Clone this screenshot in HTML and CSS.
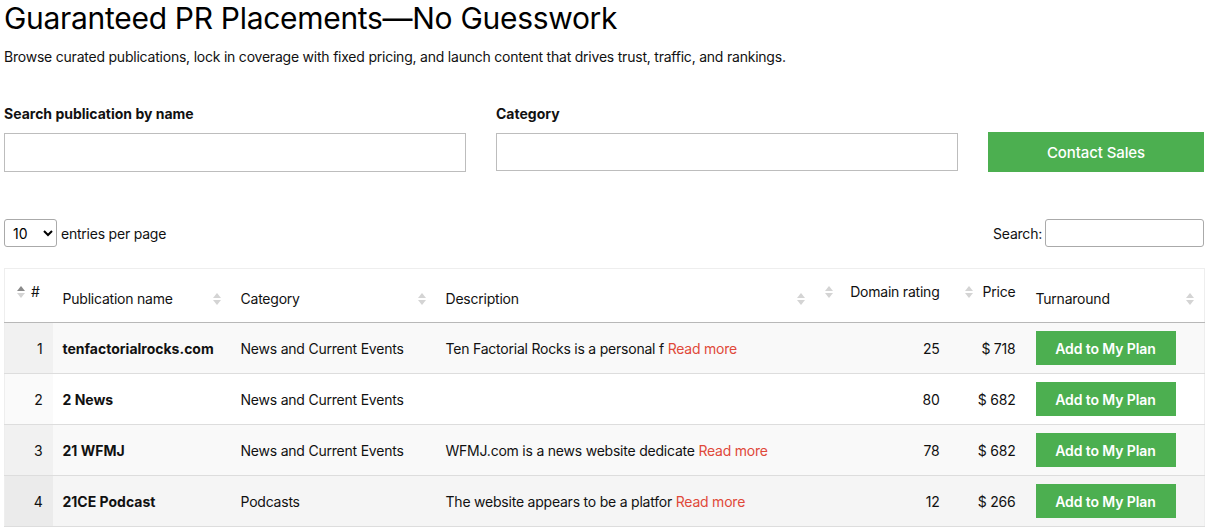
FILE: index.html
```html
<!DOCTYPE html>
<html lang="en">
<head>
<meta charset="utf-8">
<title>Guaranteed PR Placements</title>
<link rel="stylesheet" href="styles.css">
</head>
<body>
<div class="page">
  <h1 class="title">Guaranteed PR Placements—No Guesswork</h1>
  <p class="lead">Browse curated publications, lock in coverage with fixed pricing, and launch content that drives trust, traffic, and rankings.</p>

  <div class="filters">
    <div class="field">
      <label class="field-label">Search publication by name</label>
      <input class="field-input" type="text">
    </div>
    <div class="field">
      <label class="field-label">Category</label>
      <input class="field-input field-input-cat" type="text">
    </div>
    <div class="field">
      <button class="contact-btn">Contact Sales</button>
    </div>
  </div>

  <div class="dt-top">
    <div class="dt-length">
      <select class="dt-select"><option>10</option></select>
      <span>entries per page</span>
    </div>
    <div class="dt-search">
      <span>Search:</span>
      <input class="dt-search-input" type="text">
    </div>
  </div>

  <table class="dt">
    <colgroup>
      <col class="c1"><col class="c2"><col class="c3"><col class="c4"><col class="c5"><col class="c6"><col class="c7">
    </colgroup>
    <thead>
      <tr>
        <th class="th-num th-idx"><div class="th-in"><span class="sort sort-asc"><i class="up"></i><i class="down"></i></span><span>#</span></div></th>
        <th><div class="th-in"><span>Publication name</span><span class="sort"><i class="up"></i><i class="down"></i></span></div></th>
        <th><div class="th-in"><span>Category</span><span class="sort"><i class="up"></i><i class="down"></i></span></div></th>
        <th><div class="th-in"><span>Description</span><span class="sort"><i class="up"></i><i class="down"></i></span></div></th>
        <th class="th-num th-dr"><div class="th-in"><span class="sort"><i class="up"></i><i class="down"></i></span><span>Domain rating</span></div></th>
        <th class="th-num th-price"><div class="th-in"><span class="sort"><i class="up"></i><i class="down"></i></span><span>Price</span></div></th>
        <th><div class="th-in"><span>Turnaround</span><span class="sort"><i class="up"></i><i class="down"></i></span></div></th>
      </tr>
    </thead>
    <tbody>
      <tr class="odd">
        <td class="num idx">1</td>
        <td class="name">tenfactorialrocks.com</td>
        <td>News and Current Events</td>
        <td>Ten Factorial Rocks is a personal f <a class="more" href="#">Read more</a></td>
        <td class="num dr">25</td>
        <td class="num">$ 718</td>
        <td><button class="add-btn">Add to My Plan</button></td>
      </tr>
      <tr class="even">
        <td class="num idx">2</td>
        <td class="name">2 News</td>
        <td>News and Current Events</td>
        <td></td>
        <td class="num dr">80</td>
        <td class="num">$ 682</td>
        <td><button class="add-btn">Add to My Plan</button></td>
      </tr>
      <tr class="odd">
        <td class="num idx">3</td>
        <td class="name">21 WFMJ</td>
        <td>News and Current Events</td>
        <td>WFMJ.com is a news website dedicate <a class="more" href="#">Read more</a></td>
        <td class="num dr">78</td>
        <td class="num">$ 682</td>
        <td><button class="add-btn">Add to My Plan</button></td>
      </tr>
      <tr class="even hover">
        <td class="num idx">4</td>
        <td class="name">21CE Podcast</td>
        <td>Podcasts</td>
        <td>The website appears to be a platfor <a class="more" href="#">Read more</a></td>
        <td class="num dr">12</td>
        <td class="num">$ 266</td>
        <td><button class="add-btn">Add to My Plan</button></td>
      </tr>
    </tbody>
  </table>
</div>
</body>
</html>
```

FILE: styles.css
```css
* { box-sizing: border-box; }
html, body { margin: 0; padding: 0; background: #fff; }
body {
  font-family: Inter, "Noto Sans", "Liberation Sans", sans-serif;
  color: #111;
  font-size: 14px;
  letter-spacing: -0.22px;
}
.page { padding: 0 4px; width: 1208px; }

.title {
  margin: 0;
  font-size: 30px;
  line-height: 36px;
  font-weight: 400;
  color: #000;
  letter-spacing: -0.3px;
}
.lead {
  margin: 11px 0 0;
  font-size: 14px;
  line-height: 20px;
  color: #111;
}

.filters {
  margin-top: 37px;
  display: grid;
  grid-template-columns: 462px 462px 216px;
  column-gap: 30px;
  align-items: end;
}
.field { display: flex; flex-direction: column; }
.field-label {
  font-weight: 700;
  font-size: 14px;
  line-height: 20px;
  margin-bottom: 9px;
  letter-spacing: 0;
}
.field-input {
  height: 39px;
  border: 1px solid #bdbdbd;
  border-radius: 0;
  background: #fff;
}
.field-input-cat { height: 38px; margin-bottom: 1px; }
.contact-btn {
  height: 40px;
  border: 0;
  background: #4caf50;
  color: #fff;
  font-family: inherit;
  font-size: 15px;
  font-weight: 500;
  letter-spacing: -0.1px;
}

.dt-top {
  margin-top: 47px;
  display: flex;
  justify-content: space-between;
  align-items: center;
  height: 28px;
}
.dt-length, .dt-search { display: flex; align-items: center; gap: 4px; }
.dt-select {
  width: 53px;
  height: 28px;
  border: 1px solid #aaa;
  border-radius: 3px;
  background: #fff;
  font-family: inherit;
  font-size: 14px;
  padding: 0 4px;
}
.dt-search { gap: 3px; }
.dt-search-input {
  width: 159px;
  height: 28px;
  border: 1px solid #aaa;
  border-radius: 3px;
}

.dt {
  margin-top: 21px;
  width: 1200px;
  table-layout: fixed;
  border-collapse: collapse;
  border: 1px solid #eee;
}
.c1 { width: 48px; }
.c2 { width: 178px; }
.c3 { width: 205px; }
.c4 { width: 379px; }
.c5 { width: 140px; }
.c6 { width: 71px; }
.c7 { width: 179px; }

.dt th {
  height: 54px;
  padding: 15px 10px 9px;
  font-weight: 400;
  text-align: left;
  border-bottom: 1px solid #b8b8b8;
  vertical-align: middle;
  color: #111;
}
.th-in {
  display: flex;
  align-items: center;
  justify-content: space-between;
  gap: 6px;
}
.dt th.th-num { padding-top: 8px; padding-bottom: 16px; }
.dt th.th-idx { padding-left: 12px; padding-right: 13px; }
.dt th.th-dr { padding-right: 15px; }
.dt th.th-price { padding-left: 10px; }

.sort {
  display: inline-flex;
  flex-direction: column;
  gap: 2px;
  flex: none;
}
.sort i {
  display: block;
  width: 0;
  height: 0;
  border-left: 4px solid transparent;
  border-right: 4px solid transparent;
}
.sort .up { border-bottom: 5px solid #d4d4d4; }
.sort .down { border-top: 5px solid #d4d4d4; }
.sort-asc .up { border-bottom-color: #8a8a8a; }

.dt td {
  height: 51px;
  padding: 8px 10px;
  border-bottom: 1px solid #ddd;
  vertical-align: middle;
  white-space: nowrap;
  overflow: hidden;
}
.dt td.num { text-align: right; }
.dt td.dr { padding-right: 15px; }
.dt td.name { font-weight: 700; letter-spacing: 0; }

.dt tr.odd td { background: #f9f9f9; }
.dt tr.odd td.idx { background: #f1f1f1; }
.dt tr.even td { background: #fff; }
.dt tr.even td.idx { background: #fafafa; }
.dt tr.hover td { background: #f5f5f5; }
.dt tr.hover td.idx { background: #ebebeb; }

.more { color: #e0493a; text-decoration: none; }

.add-btn {
  width: 140px;
  height: 34px;
  border: 0;
  background: #4caf50;
  color: #fff;
  font-family: inherit;
  font-size: 14px;
  font-weight: 600;
  letter-spacing: -0.1px;
  display: block;
}
```
